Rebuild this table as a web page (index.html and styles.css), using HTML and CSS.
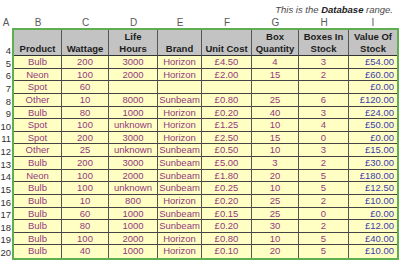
FILE: index.html
```html
<!DOCTYPE html>
<html>
<head>
<meta charset="utf-8">
<link rel="stylesheet" href="styles.css">
</head>
<body>
<div class="sheet">
  <div class="note">This is the <b>Database</b> range.</div>
  <div class="letters">
    <span>A</span><span class="first">B</span><span>C</span><span>D</span><span>E</span><span>F</span><span>G</span><span>H</span><span>I</span>
  </div>
  <div class="body">
    <div class="gutter">
      <span>4</span><span>5</span><span>6</span><span>7</span><span>8</span><span>9</span><span>10</span><span>11</span><span>12</span><span>13</span><span>14</span><span>15</span><span>16</span><span>17</span><span>18</span><span>19</span><span>20</span>
    </div>
    <div class="db">
      <div class="h">Product</div><div class="h">Wattage</div><div class="h">Life<br>Hours</div><div class="h">Brand</div><div class="h">Unit Cost</div><div class="h">Box<br>Quantity</div><div class="h">Boxes In<br>Stock</div><div class="h last">Value Of<br>Stock</div>

      <div class="c">Bulb</div><div class="c">200</div><div class="c">3000</div><div class="c">Horizon</div><div class="c">£4.50</div><div class="c">4</div><div class="c">3</div><div class="c v">£54.00</div>
      <div class="c">Neon</div><div class="c">100</div><div class="c">2000</div><div class="c">Horizon</div><div class="c">£2.00</div><div class="c">15</div><div class="c">2</div><div class="c v">£60.00</div>
      <div class="c">Spot</div><div class="c">60</div><div class="c"></div><div class="c"></div><div class="c"></div><div class="c"></div><div class="c"></div><div class="c v">£0.00</div>
      <div class="c">Other</div><div class="c">10</div><div class="c">8000</div><div class="c">Sunbeam</div><div class="c">£0.80</div><div class="c">25</div><div class="c">6</div><div class="c v">£120.00</div>
      <div class="c">Bulb</div><div class="c">80</div><div class="c">1000</div><div class="c">Horizon</div><div class="c">£0.20</div><div class="c">40</div><div class="c">3</div><div class="c v">£24.00</div>
      <div class="c">Spot</div><div class="c">100</div><div class="c">unknown</div><div class="c">Horizon</div><div class="c">£1.25</div><div class="c">10</div><div class="c">4</div><div class="c v">£50.00</div>
      <div class="c">Spot</div><div class="c">200</div><div class="c">3000</div><div class="c">Horizon</div><div class="c">£2.50</div><div class="c">15</div><div class="c">0</div><div class="c v">£0.00</div>
      <div class="c">Other</div><div class="c">25</div><div class="c">unknown</div><div class="c">Sunbeam</div><div class="c">£0.50</div><div class="c">10</div><div class="c">3</div><div class="c v">£15.00</div>
      <div class="c">Bulb</div><div class="c">200</div><div class="c">3000</div><div class="c">Sunbeam</div><div class="c">£5.00</div><div class="c">3</div><div class="c">2</div><div class="c v">£30.00</div>
      <div class="c">Neon</div><div class="c">100</div><div class="c">2000</div><div class="c">Sunbeam</div><div class="c">£1.80</div><div class="c">20</div><div class="c">5</div><div class="c v">£180.00</div>
      <div class="c">Bulb</div><div class="c">100</div><div class="c">unknown</div><div class="c">Sunbeam</div><div class="c">£0.25</div><div class="c">10</div><div class="c">5</div><div class="c v">£12.50</div>
      <div class="c">Bulb</div><div class="c">10</div><div class="c">800</div><div class="c">Horizon</div><div class="c">£0.20</div><div class="c">25</div><div class="c">2</div><div class="c v">£10.00</div>
      <div class="c">Bulb</div><div class="c">60</div><div class="c">1000</div><div class="c">Sunbeam</div><div class="c">£0.15</div><div class="c">25</div><div class="c">0</div><div class="c v">£0.00</div>
      <div class="c">Bulb</div><div class="c">80</div><div class="c">1000</div><div class="c">Sunbeam</div><div class="c">£0.20</div><div class="c">30</div><div class="c">2</div><div class="c v">£12.00</div>
      <div class="c">Bulb</div><div class="c">100</div><div class="c">2000</div><div class="c">Horizon</div><div class="c">£0.80</div><div class="c">10</div><div class="c">5</div><div class="c v">£40.00</div>
      <div class="c b">Bulb</div><div class="c b">40</div><div class="c b">1000</div><div class="c b">Horizon</div><div class="c b">£0.10</div><div class="c b">20</div><div class="c b">5</div><div class="c v b">£10.00</div>
    </div>
  </div>
</div>
</body>
</html>
```

FILE: styles.css
```css
html, body {
  margin: 0;
  padding: 0;
  background: #ffffff;
}

.sheet {
  width: 400px;
  height: 264px;
  font-family: "Liberation Sans", Arial, sans-serif;
  overflow: hidden;
}

.note {
  height: 13px;
  padding-top: 4px;
  padding-right: 7px;
  text-align: right;
  font-size: 9.5px;
  line-height: 12px;
  font-style: italic;
  color: #4a4a4a;
}

.note b {
  color: #222;
}

.letters {
  display: grid;
  grid-template-columns: 12px 50px 47px 49px 44px 50px 47px 50px 48px;
  height: 11px;
  font-size: 10px;
  line-height: 11px;
  color: #5a5a5a;
  text-align: center;
}

.letters .first {
  padding-left: 2px;
}

.body {
  display: flex;
}

.gutter {
  width: 12px;
  padding-top: 2px;
  display: grid;
  grid-template-rows: 26px repeat(16, 12.625px);
  font-size: 9.5px;
  color: #333;
  text-align: right;
}

.gutter span {
  display: flex;
  align-items: flex-end;
  justify-content: flex-end;
  padding-right: 1px;
  line-height: 11px;
}

.db {
  display: grid;
  grid-template-columns: 48px 47px 49px 44px 50px 47px 50px 48px;
  grid-template-rows: 26px repeat(16, 12.625px);
  border: 2px solid #5fae4f;
  font-size: 9.5px;
}

.h {
  background: #c3c3c3;
  border-right: 1px solid #555;
  border-bottom: 1px solid #333;
  display: flex;
  align-items: flex-end;
  justify-content: center;
  text-align: center;
  font-weight: bold;
  color: #1c1c1c;
  line-height: 12px;
  padding-bottom: 0;
  box-sizing: border-box;
}

.h.last {
  border-right: none;
}

.c {
  background: #ffffc4;
  border-right: 1px solid #555;
  border-bottom: 1px solid #444;
  box-sizing: border-box;
  color: #94397d;
  text-align: center;
  line-height: 11.6px;
  white-space: nowrap;
}

.c.v {
  border-right: none;
  text-align: right;
  padding-right: 3px;
  color: #3c3cb0;
}

.c.b {
  border-bottom: none;
}
```
